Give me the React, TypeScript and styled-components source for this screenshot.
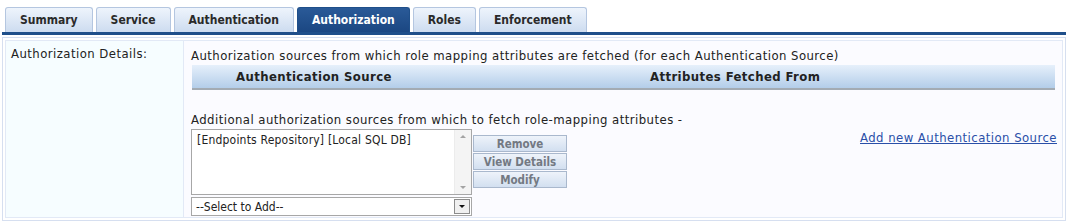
import styled, { createGlobalStyle } from 'styled-components';

const GlobalStyle = createGlobalStyle`
  body {
    margin: 0;
    background: #ffffff;
    font-family: 'DejaVu Sans Condensed', 'DejaVu Sans', sans-serif;
    font-size: 13px;
    letter-spacing: 0.45px;
    color: #222;
  }
`;

const tabs = ['Summary', 'Service', 'Authentication', 'Authorization', 'Roles', 'Enforcement'];
const ACTIVE = 'Authorization';

const Page = styled.div`
  width: 1069px;
  height: 224px;
  padding: 7px 3px 0 2px;
  box-sizing: border-box;
`;

const TabBar = styled.div`
  display: flex;
  gap: 3px;
  padding-left: 3px;
  border-bottom: 3px solid #1f4f8a;
`;

const Tab = styled.div<{ $active?: boolean }>`
  height: 25px;
  padding: 0 14px;
  display: flex;
  align-items: center;
  justify-content: center;
  font-weight: bold;
  font-size: 12px;
  letter-spacing: 0;
  border: 1px solid ${({ $active }) => ($active ? '#1f4f8a' : '#b4c6e0')};
  border-bottom: none;
  border-radius: 3px 3px 0 0;
  box-sizing: border-box;
  color: ${({ $active }) => ($active ? '#ffffff' : '#2a2a2a')};
  background: ${({ $active }) =>
    $active
      ? 'linear-gradient(#2a5a98, #1b4782)'
      : 'linear-gradient(#eef4fc, #cddcf0)'};
`;

const Panel = styled.div`
  margin-top: 2px;
  border: 1px solid #d6dff0;
  padding: 2px;
  height: 184px;
  box-sizing: border-box;
  display: grid;
  grid-template-columns: 179px 1fr;
`;

const LabelCell = styled.div`
  background: #f6fdff;
  border: 1px solid #e2e9f6;
  padding: 5px 5px;
`;

const ValueCell = styled.div`
  background: #fbfbff;
  border: 1px solid #e2e9f6;
  border-left: none;
  padding: 7px 7px 0 7px;
  display: flex;
  flex-direction: column;
`;

const Caption = styled.div`
  line-height: 16px;
`;

const HeaderBar = styled.div`
  margin: 1px 0 0 1px;
  height: 25px;
  display: grid;
  grid-template-columns: 414px 1fr;
  align-items: center;
  background: linear-gradient(#e6f0fb, #b3cde9);
  border-bottom: 2px solid #a3abb3;
  box-sizing: border-box;
`;

const HeaderCol = styled.div`
  padding-left: 44px;
  font-weight: bold;
  letter-spacing: 0.4px;
`;

const Additional = styled(Caption)`
  margin-top: 22px;
`;

const EditRow = styled.div`
  display: flex;
  align-items: flex-start;
  margin-top: 1px;
`;

const LeftStack = styled.div`
  display: flex;
  flex-direction: column;
  gap: 2px;
  width: 281px;
`;

const ListBox = styled.div`
  height: 66px;
  border: 1px solid #a7a7a7;
  background: #fff;
  display: flex;
  box-sizing: border-box;
`;

const ListItems = styled.div`
  flex: 1;
  padding: 3px 5px;
  font-size: 12px;
  letter-spacing: 0.2px;
`;

const ScrollTrack = styled.div`
  width: 16px;
  background: #f4f4f4;
  border-left: 1px solid #ececec;
  display: flex;
  flex-direction: column;
  justify-content: space-between;
  align-items: center;
  padding: 5px 0;
`;

const Arrow = styled.div<{ $dir: 'up' | 'down'; $color?: string }>`
  width: 0;
  height: 0;
  border-left: 3px solid transparent;
  border-right: 3px solid transparent;
  ${({ $dir, $color = '#a3a3a3' }) =>
    $dir === 'up' ? `border-bottom: 3px solid ${$color};` : `border-top: 3px solid ${$color};`}
`;

const SelectBox = styled.div`
  height: 19px;
  border: 1px solid #a7a7a7;
  background: #fff;
  display: flex;
  align-items: stretch;
  box-sizing: border-box;
`;

const SelectText = styled.div`
  flex: 1;
  padding-left: 4px;
  display: flex;
  align-items: center;
  font-size: 12px;
  letter-spacing: 0;
`;

const SelectButton = styled.div`
  width: 14px;
  border: 1px solid #8c8c8c;
  margin: 1px;
  background: #f0f0f0;
  display: flex;
  align-items: center;
  justify-content: center;
`;

const Buttons = styled.div`
  display: flex;
  flex-direction: column;
  gap: 1px;
  margin: 6px 0 0 1px;
`;

const ActionButton = styled.div`
  width: 94px;
  height: 17px;
  box-sizing: border-box;
  border: 1px solid #a9b8cd;
  background: linear-gradient(#eef3fa, #d2dff0);
  color: #737983;
  font-weight: bold;
  font-size: 11.5px;
  letter-spacing: 0;
  display: flex;
  align-items: center;
  justify-content: center;
`;

const LinkWrap = styled.div`
  flex: 1;
  display: flex;
  justify-content: flex-end;
  padding-top: 1px;
  margin-right: -2px;
`;

const AddLink = styled.a`
  color: #2a4fa8;
  text-decoration: underline;
  cursor: pointer;
`;

export default function App() {
  return (
    <>
      <GlobalStyle />
      <Page>
        <TabBar>
          {tabs.map((t) => (
            <Tab key={t} $active={t === ACTIVE}>
              {t}
            </Tab>
          ))}
        </TabBar>
        <Panel>
          <LabelCell>Authorization Details:</LabelCell>
          <ValueCell>
            <Caption>
              Authorization sources from which role mapping attributes are fetched (for each
              Authentication Source)
            </Caption>
            <HeaderBar>
              <HeaderCol>Authentication Source</HeaderCol>
              <HeaderCol>Attributes Fetched From</HeaderCol>
            </HeaderBar>
            <Additional>
              Additional authorization sources from which to fetch role-mapping attributes -
            </Additional>
            <EditRow>
              <LeftStack>
                <ListBox>
                  <ListItems>[Endpoints Repository] [Local SQL DB]</ListItems>
                  <ScrollTrack>
                    <Arrow $dir="up" />
                    <Arrow $dir="down" />
                  </ScrollTrack>
                </ListBox>
                <SelectBox>
                  <SelectText>--Select to Add--</SelectText>
                  <SelectButton>
                    <Arrow $dir="down" $color="#111" />
                  </SelectButton>
                </SelectBox>
              </LeftStack>
              <Buttons>
                <ActionButton>Remove</ActionButton>
                <ActionButton>View Details</ActionButton>
                <ActionButton>Modify</ActionButton>
              </Buttons>
              <LinkWrap>
                <AddLink>Add new Authentication Source</AddLink>
              </LinkWrap>
            </EditRow>
          </ValueCell>
        </Panel>
      </Page>
    </>
  );
}
